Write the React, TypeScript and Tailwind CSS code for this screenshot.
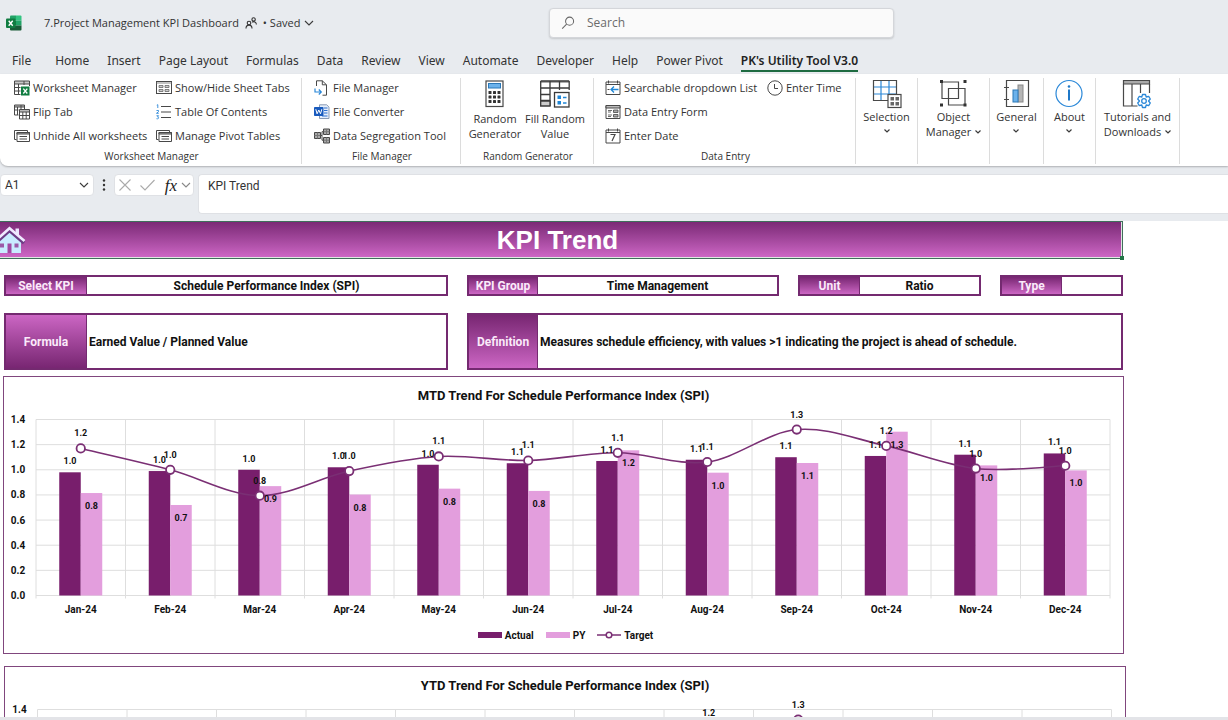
import type { ReactNode } from "react";

const UI = "font-['Open_Sans','Noto_Sans',sans-serif]";
const SHEET = "font-['Roboto','Liberation_Sans',sans-serif]";

/* ---------- icons ---------- */

function Svg({ size, children }: { size: number; children: ReactNode }) {
  return (
    <svg
      width={size}
      height={size}
      viewBox={`0 0 ${size} ${size}`}
      fill="none"
      stroke="#484848"
      strokeWidth="1"
      className="shrink-0"
      aria-hidden="true"
    >
      {children}
    </svg>
  );
}

function Chevron({ size = 10, color = "#3b3b3b" }: { size?: number; color?: string }) {
  return (
    <svg width={size} height={size} viewBox="0 0 10 10" fill="none" stroke={color} strokeWidth="1.1" className="shrink-0" aria-hidden="true">
      <path d="M1 3l4 4 4-4" />
    </svg>
  );
}

function SmallChevron() {
  return (
    <svg width="6" height="6" viewBox="0 0 6 6" fill="none" stroke="#3b3b3b" strokeWidth="1.2" className="shrink-0" aria-hidden="true">
      <path d="M.5 1.5L3 4l2.500-2.500" />
    </svg>
  );
}

const ExcelLogo = () => (
  <svg width="16" height="16" viewBox="0 0 16 16" className="shrink-0" aria-hidden="true">
    <path d="M4 1.500q0-1 1-1h5v5H4z" fill="#21a366" />
    <path d="M10 .5h4.500q1 0 1 1v4H10z" fill="#33c481" />
    <path d="M4 5.500h6v5H4z" fill="#107c41" />
    <path d="M10 5.500h5.500v5H10z" fill="#21a366" />
    <path d="M4 10.500h11.500v4q0 1-1 1H5q-1 0-1-1z" fill="#185c37" />
    <rect x="0" y="3.500" width="9.500" height="9.500" rx="1" fill="#107c41" />
    <path d="M2.700 5.800l4 5M6.700 5.800l-4 5" stroke="#fff" strokeWidth="1.400" />
  </svg>
);

const PeopleIcon = () => (
  <svg width="12" height="12" viewBox="0 0 12 12" fill="none" stroke="#333" strokeWidth="1.100" className="shrink-0" aria-hidden="true">
    <circle cx="4" cy="6" r="1.800" />
    <path d="M1 11.500c0-4.500 6-4.500 6 0" />
    <circle cx="8.600" cy="2.400" r="1.700" />
    <path d="M7.200 5.200c1.500-1.200 4.200-.4 4.200 2.300" />
  </svg>
);

const SearchIcon = () => (
  <svg width="14" height="14" viewBox="0 0 15 15" fill="none" stroke="#666" strokeWidth="1.100" className="shrink-0" aria-hidden="true">
    <circle cx="9.200" cy="5.500" r="4.300" />
    <path d="M6 8.600L1.300 13.500" />
  </svg>
);

const WorksheetIcon = () => (
  <Svg size={16}>
    <path d="M.5 1h15v3H.5z" fill="#c8c8c8" />
    <path d="M.5 4v10.500h6M.5 7.500h6M.5 11h6M4.500 4v10.500M10 1v4M15.500 4v2" />
    <rect x="7" y="6.500" width="8.500" height="9" fill="#107c41" stroke="none" />
    <path d="M9.300 8.700l4 4.800M13.300 8.700l-4 4.800" stroke="#fff" strokeWidth="1.300" />
  </Svg>
);
const FlipIcon = () => (
  <Svg size={16}>
    <path d="M.5 1h10v2H.5z" fill="#bbb" />
    <path d="M.5 3v8h4M.5 6h4M3.500 3v8M10.500 3v2M7 1v4" />
    <path d="M5.500 5.500h10v2.500h-10z" fill="#bbb" />
    <path d="M5.500 8v7h10V8M5.500 11.500h10M8.800 8v7M12.200 8v7" />
  </Svg>
);
const StackIcon = () => (
  <Svg size={16}>
    <path d="M2.500 11.500h-2v-9h13v1.500" />
    <path d="M3 4.500h12.500v9H3z" fill="#fff" />
    <path d="M3 4.500h12.500v1.500H3z" fill="#aaa" />
    <path d="M5.500 8.500h7.500M5.500 11h7.500" />
  </Svg>
);
const TabsIcon = () => (
  <Svg size={16}>
    <rect x=".5" y="1.500" width="15" height="12" />
    <path d="M.5 3h15" stroke="#888" />
    <path d="M3 5.500h4v2H3zM9 5.500h4v2H9zM3 9.500h4v2H3zM9 9.500h4v2H9z" fill="#ccc" stroke="#666" strokeWidth=".8" />
  </Svg>
);
const ContentsIcon = () => (
  <Svg size={16}>
    <path d="M5 2.500h10M5 8h10M5 13.500h10" />
    <path d="M.8 1.200l1-.5v3.300M.5 6.500h2v1.200l-2 1.600h2.200M.5 11.700h2L1.500 13c1.800 0 1.600 2.300-1 1.700" stroke="#2b88d8" strokeWidth=".9" />
  </Svg>
);
const FileIcon = () => (
  <Svg size={16}>
    <path d="M2.500 6V.8h5.800L12.500 4.800V15.200H8.500" />
    <path d="M8.300.8v4h4.200" />
    <path d="M1 8.500v3.500h6M4.800 9.500L7.300 12l-2.500 2.500" stroke="#2b88d8" strokeWidth="1.200" />
  </Svg>
);
const WordIcon = () => (
  <Svg size={16}>
    <path d="M5.500.8h7.200l2.300 2.300v11.400H5.500z" fill="#e6eefa" stroke="#8a9bb5" />
    <path d="M10 4h3.500M10 6.500h3.500M10 9h3.500M8 12h5.500" stroke="#2b6fd0" />
    <rect x="0" y="3" width="9.500" height="9" rx=".8" fill="#185abd" stroke="none" />
    <path d="M1.800 5.200l1.300 4.600L4.800 6l1.700 3.800L7.800 5.200" stroke="#fff" />
  </Svg>
);
const SegregateIcon = () => (
  <Svg size={16}>
    <path d="M.5 4.500h6v6h-6z" fill="#aaa" />
    <path d="M9.500 1h6v5.500h-6zM9.500 9.500h6V15h-6z" fill="#aaa" />
    <path d="M.5 7.500h6M3.500 4.500v6M9.500 3.700h6M12.500 1v5.500M9.500 12.200h6M12.500 9.500V15" stroke="#777" />
    <path d="M6.500 7.500H8M9.500 3.700H8v8.500h1.500" />
  </Svg>
);
const DropdownIcon = () => (
  <Svg size={16}>
    <path d="M1 2h14v12.500H1zM1 4.500h14M3.500.5v3M12.500.5v3" />
    <path d="M13.500 9.500H6M9 6.500l-3 3 3 3" stroke="#1f86d6" strokeWidth="1.300" />
    <path d="M2.500 9.500h2" />
  </Svg>
);
const FormIcon = () => (
  <Svg size={16}>
    <path d="M1 1.500h14v13H1z" />
    <path d="M1 1.500h14V4H1z" fill="#bbb" />
    <path d="M3 6.500h4M3 8h3M3 11h4M3 12.500h3" strokeWidth=".8" />
    <path d="M8.500 6h4.500v2.500H8.500zM8.500 10.500h4.500V13H8.500z" fill="#aaa" strokeWidth=".8" />
  </Svg>
);
const DateIcon = () => (
  <Svg size={16}>
    <path d="M1 2h14v13H1zM1 4.500h14M3.500.5v3M12.500.5v3" />
    <path d="M5.500 6.500h4.500L7 13" strokeWidth="1.200" />
  </Svg>
);
const ClockIcon = () => (
  <Svg size={16}>
    <circle cx="8" cy="8" r="7.200" />
    <path d="M7.500 4v4.500h3.500" />
  </Svg>
);

const CalculatorIcon = () => (
  <Svg size={30}>
    <rect x="6" y="2" width="17" height="25.500" strokeWidth="1.200" />
    <rect x="8.500" y="4.500" width="12" height="4.500" fill="#6cb2eb" stroke="#2b78b8" />
    {[12, 16.5, 21].map((y) =>
      [8.5, 13, 17.5].map((x) => <rect key={`${x}-${y}`} x={x} y={y} width="3" height="3" rx=".6" fill="#333" stroke="none" />),
    )}
  </Svg>
);
const FillIcon = () => (
  <Svg size={30}>
    <g strokeWidth="1.300" stroke="#3a3a3a">
      <path d="M.7 2h28.500v1.800H.7z" fill="#999" stroke="none" />
      <path d="M.7 2h28.500M.7 2v25M29.200 2v9M10 2v25M19.500 2v9M.7 9h28.500M.7 15.500h9.500M.7 21.500h9.500" />
      <path d="M.7 22h9.300v5H.7z" fill="#ccc" />
      <rect x="14.500" y="13.500" width="14.500" height="14.500" fill="#fff" />
    </g>
    <path d="M17.500 16.500h3.500v3.500h-3.500zM17.500 22h3.500v3.500h-3.500z" fill="#1f86d6" stroke="none" />
    <path d="M23 18.500h3.500M23 24h3.500" stroke="#1f86d6" strokeWidth="1.500" />
  </Svg>
);
const SelectionIcon = () => (
  <Svg size={30}>
    <path d="M9 1.500v20M17 1.500v20M1.500 8h23M1.500 15h23" stroke="#2b88d8" strokeWidth="1.200" />
    <path d="M1.500 1.500h23v20h-23z" strokeWidth="1.200" />
    <rect x="16" y="15.500" width="13" height="13" fill="#fff" strokeWidth="1.200" />
    <path d="M18.500 18h3.500v3.500h-3.500zM23.500 18H27v3.500h-3.500zM18.500 23h3.500v3.500h-3.500zM23.500 23H27v3.500h-3.500z" fill="#666" stroke="none" />
  </Svg>
);
const ObjectIcon = () => (
  <Svg size={30}>
    <path d="M4 3h16.500v16.500H4zM10.500 9.500H27V26H10.500z" strokeWidth="1.200" />
    <g fill="#333" stroke="none">
      <rect x="2" y="1" width="3" height="3" />
      <rect x="25.500" y="1" width="3" height="3" />
      <rect x="2" y="24.500" width="3" height="3" />
      <rect x="25.500" y="24.500" width="3" height="3" />
    </g>
  </Svg>
);
const GeneralIcon = () => (
  <Svg size={30}>
    <path d="M5.500 1.500h22v26h-22zM3 8.500h5M3 20.500h5" strokeWidth="1.200" />
    <rect x="17" y="6" width="5" height="17" fill="#b5b5b5" stroke="#888" />
    <rect x="12" y="11" width="5" height="12" fill="#6cb2eb" stroke="#2b78b8" />
  </Svg>
);
const AboutIcon = () => (
  <Svg size={30}>
    <circle cx="15" cy="14.500" r="13" stroke="#2b88d8" strokeWidth="1.200" />
    <path d="M15 10.500v11" stroke="#1f78c8" strokeWidth="2" />
    <circle cx="15" cy="7.500" r="1.300" fill="#1f78c8" stroke="none" />
  </Svg>
);
const TutorialsIcon = () => (
  <Svg size={30}>
    <path d="M1.500 5v22h14M10 5v22M18.500 5v9M27.500 5v9" strokeWidth="1.200" />
    <path d="M1.500 1.500h26V5h-26z" fill="#aaa" strokeWidth="1.200" />
    <g stroke="#2b88d8" strokeWidth="1.300" fill="#fff" strokeLinejoin="round">
      <path d="M20.500 15.500h3l.7 2.500 2.500-.7 1.600 2.700-1.800 2 1.800 2-1.600 2.600-2.500-.6-.7 2.500h-3l-.7-2.500-2.500.6-1.600-2.600 1.800-2-1.800-2 1.600-2.700 2.500.7z" />
      <circle cx="22" cy="22" r="2.300" />
    </g>
  </Svg>
);

const HouseIcon = () => (
  <svg width="26" height="30" viewBox="0 0 26 30" className="block shrink-0" aria-hidden="true">
    <path d="M15.500 3.500h3.500v8h-3.500z" fill="#ece6ff" />
    <path d="M-1 15L9.500 5.500 21 15v13H-1z" fill="#c9ecff" />
    <path d="M-4 17.500L9.500 5.500 24 18" fill="none" stroke="#6d3c86" strokeWidth="3.500" />
    <path d="M-4 15.500L9.500 3.200 24.500 16" fill="none" stroke="#f0eaff" strokeWidth="2.600" />
    <path d="M7.500 18.500h4V28h-4z" fill="#a24aa2" />
    <path d="M0 18.500h4v4H0zM14.500 18.500h4v4h-4z" fill="#9b5aa8" />
  </svg>
);

/* ---------- ribbon ---------- */

function RibbonButton({ icon, label }: { icon: ReactNode; label: string }) {
  return (
    <button type="button" className="flex h-6 items-center gap-[3px] text-left whitespace-nowrap">
      {icon}
      <span>{label}</span>
    </button>
  );
}

function BigButton({ icon, lines, menu }: { icon: ReactNode; lines: string[]; menu?: boolean }) {
  const inline = menu && lines.length > 1;
  return (
    <button type="button" className="flex flex-col items-center pt-px leading-[15px] whitespace-nowrap">
      {icon}
      <span className={`flex flex-col items-center ${menu ? "" : "mt-[2px]"}`}>
        {lines.map((line, i) => (
          <span key={line} className="flex items-center gap-1">
            {line}
            {inline && i === lines.length - 1 && <SmallChevron />}
          </span>
        ))}
      </span>
      {menu && !inline && (
        <span className="mt-1">
          <SmallChevron />
        </span>
      )}
    </button>
  );
}

function Group({ label, children }: { label?: string; children: ReactNode }) {
  return (
    <section aria-label={label} className="flex flex-col border-r border-[#dcdcdc]">
      <div className="flex-1">{children}</div>
      {label && <div className="pl-[2px] text-center text-[10px] leading-4 text-[#333]">{label}</div>}
    </section>
  );
}

function Ribbon() {
  return (
    <div className="rounded-bl-lg bg-white shadow-[0_1px_2px_rgba(0,0,0,0.25)]">
      <div className="grid h-[92px] grid-cols-[302px_159px_133px_262px_62px_72px_54px_52px_84px] pt-1 pb-[5px] text-[11px] text-[#333]">
        <Group label="Worksheet Manager">
          <div className="-mt-[2px] grid grid-cols-[142px_1fr] pl-[14px]">
            <RibbonButton icon={<WorksheetIcon />} label="Worksheet Manager" />
            <RibbonButton icon={<TabsIcon />} label="Show/Hide Sheet Tabs" />
            <RibbonButton icon={<FlipIcon />} label="Flip Tab" />
            <RibbonButton icon={<ContentsIcon />} label="Table Of Contents" />
            <RibbonButton icon={<StackIcon />} label="Unhide All worksheets" />
            <RibbonButton icon={<StackIcon />} label="Manage Pivot Tables" />
          </div>
        </Group>
        <Group label="File Manager">
          <div className="-mt-[2px] pl-3">
            <RibbonButton icon={<FileIcon />} label="File Manager" />
            <RibbonButton icon={<WordIcon />} label="File Converter" />
            <RibbonButton icon={<SegregateIcon />} label="Data Segregation Tool" />
          </div>
        </Group>
        <Group label="Random Generator">
          <div className="grid grid-cols-[60px_60px] pl-1">
            <BigButton icon={<CalculatorIcon />} lines={["Random", "Generator"]} />
            <BigButton icon={<FillIcon />} lines={["Fill Random", "Value"]} />
          </div>
        </Group>
        <Group label="Data Entry">
          <div className="-mt-[2px] grid grid-cols-[162px_1fr] pl-[11px]">
            <RibbonButton icon={<DropdownIcon />} label="Searchable dropdown List" />
            <RibbonButton icon={<ClockIcon />} label="Enter Time" />
            <div className="col-span-2">
              <RibbonButton icon={<FormIcon />} label="Data Entry Form" />
            </div>
            <div className="col-span-2">
              <RibbonButton icon={<DateIcon />} label="Enter Date" />
            </div>
          </div>
        </Group>
        <Group>
          <div className="flex justify-center">
            <BigButton icon={<SelectionIcon />} lines={["Selection"]} menu />
          </div>
        </Group>
        <Group>
          <div className="flex justify-center">
            <BigButton icon={<ObjectIcon />} lines={["Object", "Manager"]} menu />
          </div>
        </Group>
        <Group>
          <div className="flex justify-center">
            <BigButton icon={<GeneralIcon />} lines={["General"]} menu />
          </div>
        </Group>
        <Group>
          <div className="flex justify-center">
            <BigButton icon={<AboutIcon />} lines={["About"]} menu />
          </div>
        </Group>
        <Group>
          <div className="flex justify-center">
            <BigButton icon={<TutorialsIcon />} lines={["Tutorials and", "Downloads"]} menu />
          </div>
        </Group>
      </div>
    </div>
  );
}

/* ---------- window chrome ---------- */

const TABS = ["Home", "Insert", "Page Layout", "Formulas", "Data", "Review", "View", "Automate", "Developer", "Help", "Power Pivot"];

function TitleBar() {
  return (
    <header className="grid h-[46px] grid-cols-[549px_345px_1fr] items-center text-[11px] text-[#333]">
      <div className="flex items-center pl-[6px]">
        <ExcelLogo />
        <span className="ml-[22px]">7.Project Management KPI Dashboard</span>
        <span className="ml-[6px]">
          <PeopleIcon />
        </span>
        <button type="button" className="ml-[6px] flex items-center gap-1">
          <span>• Saved</span>
          <Chevron />
        </button>
      </div>
      <label className="flex h-[30px] items-center gap-3 rounded border border-[#d4d6da] bg-[#fafafa] px-[11px] shadow-[0_1px_2px_rgba(0,0,0,0.15)]">
        <SearchIcon />
        <input type="search" placeholder="Search" aria-label="Search" className="min-w-0 flex-1 bg-transparent text-xs outline-none placeholder:text-[#6b6b6b]" />
      </label>
    </header>
  );
}

function TabBar() {
  return (
    <nav aria-label="Ribbon tabs" className="flex h-7 items-center pt-px pl-3 font-['Noto_Sans','Open_Sans',sans-serif] text-xs whitespace-nowrap text-[#333]">
      <button type="button" className="mr-6">File</button>
      <div className="flex items-center gap-[18px]">
        {TABS.map((tab) => (
          <button key={tab} type="button">
            {tab}
          </button>
        ))}
        <button type="button" className="border-y-2 border-t-transparent border-b-[#1e6b41] leading-[18px] font-semibold text-[#222]" aria-current="page">
          PK's Utility Tool V3.0
        </button>
      </div>
    </nav>
  );
}

function FormulaBar() {
  return (
    <div className="flex items-start gap-1 pt-2 pb-[7px] text-[11px] text-[#333]">
      <div className="flex h-[22px] w-[94px] items-center rounded border border-[#dfe1e5] bg-white px-1">
        <input aria-label="Name box" defaultValue="A1" className={`min-w-0 flex-1 text-xs outline-none ${SHEET}`} />
        <button type="button" aria-label="Choose a name">
          <Chevron />
        </button>
      </div>
      <svg width="12" height="22" viewBox="0 0 12 22" fill="#333" aria-hidden="true">
        <circle cx="6" cy="6.500" r="1.200" />
        <circle cx="6" cy="11" r="1.200" />
        <circle cx="6" cy="15.500" r="1.200" />
      </svg>
      <div className="flex h-[22px] w-20 items-center justify-between rounded border border-[#dfe1e5] bg-white pr-[2px] pl-1">
        <button type="button" aria-label="Cancel">
          <svg width="12" height="12" viewBox="0 0 12 12" stroke="#aaa" strokeWidth="1.100">
            <path d="M.5.5l11 11M11.500.5l-11 11" />
          </svg>
        </button>
        <button type="button" aria-label="Enter">
          <svg width="15" height="12" viewBox="0 0 15 12" fill="none" stroke="#aaa" strokeWidth="1.100">
            <path d="M.5 6.500l4.500 4.500L14.500 1" />
          </svg>
        </button>
        <button type="button" aria-label="Insert function" className="flex items-center gap-1 font-['Liberation_Serif',serif] text-[17px] leading-none text-[#222] italic">
          fx
          <Chevron color="#888" />
        </button>
      </div>
      <textarea
        aria-label="Formula bar"
        defaultValue="KPI Trend"
        className={`h-[40px] min-w-0 flex-1 resize-none rounded-l border border-r-0 border-[#dfe1e5] bg-white px-[9px] py-[3px] text-xs leading-4 outline-none ${SHEET}`}
      />
    </div>
  );
}

/* ---------- sheet ---------- */

function Field({ label, value, wide, tall, flip, labelWidth }: { label: string; value: string; wide?: boolean; tall?: boolean; flip?: boolean; labelWidth: string }) {
  return (
    <dl className={`flex border-2 border-[#742a70] text-xs font-bold ${tall ? "h-[57px]" : "h-[21px]"} ${wide ? "col-span-3" : ""}`}>
      <dt
        className={`flex shrink-0 items-center justify-center border-r border-[#742a70] from-[#782672] to-[#cc66c4] text-[#fbeafa] ${flip ? "bg-linear-to-t" : "bg-linear-to-b"} ${labelWidth}`}
      >
        {label}
      </dt>
      <dd className={`flex flex-1 items-center text-[#111] ${tall ? "pl-[2px]" : "justify-center"}`}>{value}</dd>
    </dl>
  );
}

type Point = { month: string; actual: number; py: number; target: number };

const MONTHS = ["Jan", "Feb", "Mar", "Apr", "May", "Jun", "Jul", "Aug", "Sep", "Oct", "Nov", "Dec"];

function series(actual: number[], py: number[], target: number[]): Point[] {
  return MONTHS.map((m, i) => ({ month: `${m}-24`, actual: actual[i], py: py[i], target: target[i] }));
}

const MTD = series(
  [0.98, 0.99, 1.0, 1.02, 1.04, 1.052, 1.07, 1.08, 1.1, 1.11, 1.12, 1.13],
  [0.815, 0.72, 0.87, 0.803, 0.85, 0.832, 1.155, 0.977, 1.054, 1.303, 1.035, 0.995],
  [1.17, 1.0, 0.794, 0.99, 1.106, 1.074, 1.135, 1.062, 1.32, 1.19, 1.01, 1.032],
);
const YTD = series(
  [0.98, 0.98, 0.99, 1.0, 1.01, 1.01, 1.02, 1.03, 1.04, 1.04, 1.05, 1.06],
  [0.82, 0.77, 0.8, 0.8, 0.81, 0.81, 0.86, 0.88, 0.9, 0.94, 0.95, 0.95],
  [1.17, 1.08, 0.99, 0.99, 1.01, 1.02, 1.04, 1.249, 1.32, 1.1, 1.05, 1.05],
);

const LEFT = 32;
const STEP = 89.5;
const BAR = 21.5;
const TOP = 6.5;
const BASE = 182.5;
const yOf = (v: number) => BASE - (v * (BASE - TOP)) / 1.4;
const xOf = (i: number) => LEFT + STEP * (i + 0.5);

function smoothPath(points: [number, number][]) {
  let d = `M${points[0][0]} ${points[0][1]}`;
  for (let i = 0; i < points.length - 1; i++) {
    const before = points[i - 1] ?? points[i];
    const from = points[i];
    const to = points[i + 1];
    const after = points[i + 2] ?? to;
    d += ` C${from[0] + (to[0] - before[0]) / 6} ${from[1] + (to[1] - before[1]) / 6} ${to[0] - (after[0] - from[0]) / 6} ${to[1] - (after[1] - from[1]) / 6} ${to[0]} ${to[1]}`;
  }
  return d;
}

const FULL = 206;

/* `depth` is how far down the plot is labelled; a chart that runs past the sheet's end gets only its upper labels. */
function TrendChart({ title, data, depth = FULL }: { title: string; data: Point[]; depth?: number }) {
  const ticks = [0, 0.2, 0.4, 0.6, 0.8, 1, 1.2, 1.4];
  const full = depth === FULL;
  const line = smoothPath(data.map((p, i) => [xOf(i), yOf(p.target)]));
  const label = (x: number, y: number, text: string) =>
    y <= depth ? (
      <text key={`${x}-${y}`} x={x} y={y}>
        {text}
      </text>
    ) : null;
  return (
    <figure className={`border border-[#80467d] bg-white ${full ? "pb-[2px]" : "border-b-0"}`}>
      <figcaption className="flex h-9 items-center justify-center pt-px text-[13px] font-bold text-[#111]">{title}</figcaption>
      <svg viewBox={`0 0 1119 ${depth}`} className="block w-full overflow-visible" role="img" aria-label={title}>
        <g stroke="#dedede" strokeWidth="1">
          {ticks.map((t) => (
            <path key={t} d={`M${LEFT} ${yOf(t)}H${LEFT + STEP * 12}`} />
          ))}
          {Array.from({ length: 13 }, (_, i) => (
            <path key={i} d={`M${LEFT + STEP * i} ${TOP}V${BASE + 3}`} />
          ))}
        </g>
        {data.map((p, i) => (
          <g key={p.month}>
            <rect x={xOf(i) - BAR} y={yOf(p.actual)} width={BAR} height={BASE - yOf(p.actual)} fill="#781e6c" />
            <rect x={xOf(i)} y={yOf(p.py)} width={BAR} height={BASE - yOf(p.py)} fill="#e39edd" />
          </g>
        ))}
        <path d={line} fill="none" stroke="#7a2f74" strokeWidth="1.6" />
        {data.map((p, i) => (
          <circle key={p.month} cx={xOf(i)} cy={yOf(p.target)} r="4.200" fill="#fff" stroke="#7a2f74" strokeWidth="1.800" />
        ))}
        <g fontSize="9" fontWeight="700" textAnchor="middle" fill="#111">
          {data.map((p, i) => (
            <g key={p.month}>
              {label(xOf(i) - BAR / 2, yOf(p.actual) - 8, p.actual.toFixed(1))}
              {label(xOf(i) + BAR / 2, yOf(p.py) + 16, p.py.toFixed(1))}
              {label(xOf(i), yOf(p.target) - 12, p.target.toFixed(1))}
            </g>
          ))}
        </g>
        <g fontSize="10" fontWeight="700" textAnchor="middle" fill="#111">
          {data.map((p, i) => label(xOf(i), 200, p.month))}
          {ticks.map((t) => label(14, yOf(t) + 3.5, t.toFixed(1)))}
        </g>
      </svg>
      {full && (
        <ul className="flex h-8 items-center justify-center gap-3 pl-1 text-[10px] font-bold text-[#111]">
          <li className="flex items-center gap-[3px]">
            <span className="h-[6px] w-6 bg-[#781e6c]" />
            Actual
          </li>
          <li className="flex items-center gap-[3px]">
            <span className="h-[6px] w-6 bg-[#e39edd]" />
            PY
          </li>
          <li className="flex items-center gap-[3px]">
            <svg width="24" height="8" viewBox="0 0 24 8" aria-hidden="true">
              <path d="M0 4h24" stroke="#7a2f74" strokeWidth="1.500" />
              <circle cx="12" cy="4" r="2.800" fill="#fff" stroke="#7a2f74" strokeWidth="1.500" />
            </svg>
            Target
          </li>
        </ul>
      )}
    </figure>
  );
}

function Sheet() {
  return (
    <main className={`min-h-0 flex-1 overflow-hidden bg-white ${SHEET}`}>
      <div className="max-w-[1126px]">
        <div className="relative mr-[3px] border border-l-0 border-[#3f6f5b] bg-[#dfe7e2] pr-px pb-px">
          <div className="flex h-[35px] items-center bg-linear-to-b from-[#7b2a76] to-[#cd66c5]">
            <a href="#home" aria-label="Home">
              <HouseIcon />
            </a>
            <h1 className="flex-1 pr-8 text-center font-['Liberation_Sans',sans-serif] text-[26px] leading-none font-bold text-white">KPI Trend</h1>
          </div>
          <span className="absolute -right-[2px] -bottom-[2px] size-1 bg-[#217346]" />
        </div>
        <div className="mt-4 mr-[3px] ml-1 grid grid-cols-[444fr_312fr_183fr_123fr] gap-x-[19px] gap-y-[17px]">
          <Field label="Select KPI" value="Schedule Performance Index (SPI)" labelWidth="w-[81px]" />
          <Field label="KPI Group" value="Time Management" labelWidth="w-[69px]" />
          <Field label="Unit" value="Ratio" labelWidth="w-[60px]" />
          <Field label="Type" value="" labelWidth="w-[60px]" />
          <Field label="Formula" value="Earned Value / Planned Value" tall flip labelWidth="w-[81px]" />
          <Field label="Definition" value="Measures schedule efficiency, with values >1 indicating the project is ahead of schedule." tall wide labelWidth="w-[69px]" />
        </div>
        <div className="mt-[6px] mr-[2px] ml-[3px]">
          <TrendChart title="MTD Trend For Schedule Performance Index (SPI)" data={MTD} />
        </div>
        <div className="mt-3 ml-1">
          <TrendChart title="YTD Trend For Schedule Performance Index (SPI)" data={YTD} depth={15} />
        </div>
      </div>
    </main>
  );
}

export default function App() {
  return (
    <div className={`flex h-screen flex-col overflow-hidden bg-[#e8ebef] ${UI}`}>
      <TitleBar />
      <TabBar />
      <Ribbon />
      <FormulaBar />
      <Sheet />
      <div className="h-[3px] shrink-0 bg-[#e3e4e8]" />
    </div>
  );
}
